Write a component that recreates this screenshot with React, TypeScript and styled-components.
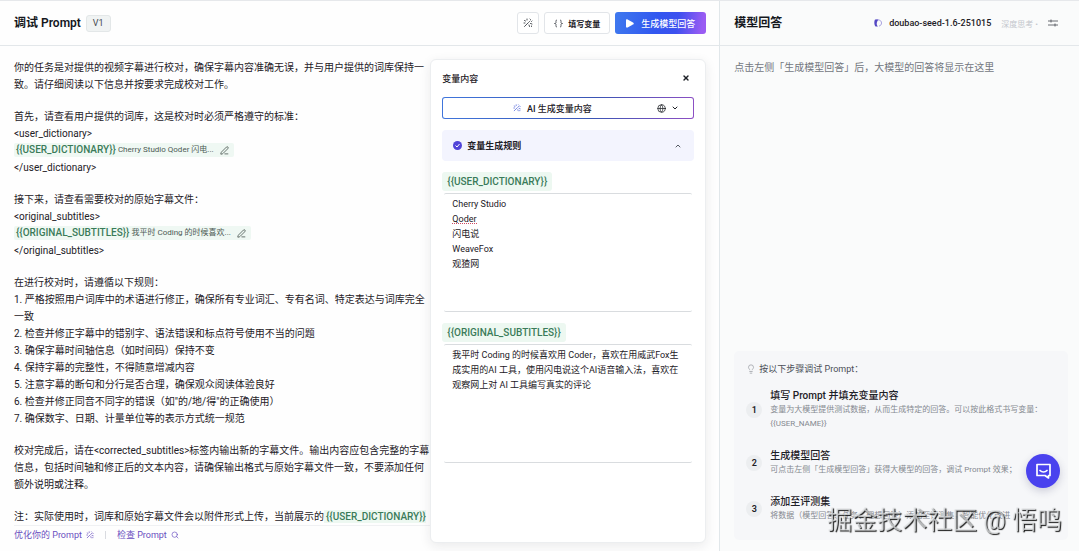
import React from "react";
import styled, { createGlobalStyle } from "styled-components";
import { ChevronDown, ChevronUp, Globe, Lightbulb, PenLine, Search, X } from "lucide-react";

const Global = createGlobalStyle`
  * { box-sizing: border-box; }
  body {
    margin: 0;
    background: #fefefe;
    color: #1d2026;
    font-family: Roboto, "Noto Sans CJK SC", "Liberation Sans", sans-serif;
    font-size: 10px;
  }
  button, textarea { font: inherit; color: inherit; }
  button { cursor: pointer; padding: 0; }
  p, h1, h2, h3, ol { margin: 0; padding: 0; }
  svg { flex: none; }
`;

const Page = styled.div`
  display: grid;
  grid-template-columns: 2fr 1fr;
  min-height: 100vh;
  border-top: 1px solid #e6e8eb;
`;

const Column = styled.section<{ $muted?: boolean }>`
  display: flex;
  flex-direction: column;
  min-width: 0;
  background: ${(p) => (p.$muted ? "#fafbfb" : "#fefefe")};
  border-left: ${(p) => (p.$muted ? "1px solid #e1e7ea" : "none")};
`;

const Header = styled.header<{ $end: number }>`
  display: flex;
  align-items: center;
  gap: 5px;
  height: 45px;
  padding: 0 ${(p) => p.$end}px 0 14px;
  border-bottom: 1px solid #e3e7ea;
`;

const Title = styled.h1`
  font-size: 12px;
  line-height: 18px;
  font-weight: 600;
  color: #15181d;
`;

const Version = styled.span`
  padding: 0 6px;
  border: 1px solid #e3e7e8;
  border-radius: 3px;
  background: #f0f3f3;
  color: #444950;
  font-size: 9px;
  line-height: 15px;
`;

const Spacer = styled.div`
  flex: 1;
`;

const OutlineButton = styled.button`
  display: flex;
  align-items: center;
  justify-content: center;
  gap: 5px;
  height: 22px;
  padding: 0 9px;
  border: 1px solid #e2e5e9;
  border-radius: 3px;
  background: #fff;
  font-size: 8px;
  font-weight: 600;
`;

const IconButton = styled(OutlineButton)`
  width: 22px;
  padding: 0;
`;

const PrimaryButton = styled(OutlineButton)`
  gap: 7px;
  padding: 0 11px;
  border: 0;
  background: linear-gradient(100deg, #3f79ee 0%, #3157f0 45%, #3d50ef 68%, #9a5cf3 95%);
  color: #fff;
  font-size: 9px;
  font-weight: 500;
`;

const Body = styled.div`
  display: grid;
  grid-template-columns: minmax(0, 1fr) 276px;
  flex: 1;
  padding: 0 13px 0 14px;
`;

const Editor = styled.div`
  display: flex;
  flex-direction: column;
  padding-top: 13px;
`;

const Prompt = styled.div`
  display: flex;
  flex-direction: column;
  gap: 15px;
  line-height: 17px;
`;

const Chip = styled.span`
  display: inline-flex;
  align-items: center;
  gap: 2px;
  height: 14px;
  margin-top: 1px;
  padding: 0 5px 0 2px;
  border-radius: 2px;
  background: #eff8f3;
  color: #4c5a54;
  font-size: 8px;
  line-height: 14px;
  vertical-align: top;
`;

const ChipLine = styled.p`
  height: 17px;
`;

const Variable = styled.strong`
  color: #3a7b59;
  font-size: 10px;
  font-weight: 500;
`;

const InlineVariable = styled(Variable)`
  padding: 1px 0 1px 2px;
  background: #edf8f1;
`;

const EditButton = styled.button`
  display: flex;
  margin-left: 4px;
  border: 0;
  background: none;
  color: #3c4a44;
`;

const EditorFooter = styled.footer`
  display: flex;
  align-items: center;
  gap: 11px;
  height: 18px;
  border-top: 1px solid #f0f1f3;
`;

const FooterLink = styled.a`
  display: flex;
  align-items: center;
  gap: 4px;
  color: #6a4fc0;
  font-size: 9px;
  line-height: 14px;
  text-decoration: none;
`;

const Divider = styled.span`
  width: 1px;
  height: 8px;
  background: #d9dbe0;
`;

const Panel = styled.aside`
  margin: 13px 0 8px;
  padding: 10px 11px 0;
  border: 1px solid #eceef0;
  border-radius: 6px;
  background: #fff;
  box-shadow: 0 3px 12px rgba(30, 35, 45, 0.09);
`;

const PanelHead = styled.div`
  display: flex;
  align-items: center;
  justify-content: space-between;
  height: 16px;
  padding-right: 4px;
`;

const PanelTitle = styled.h2`
  font-size: 9px;
  font-weight: 500;
`;

const CloseButton = styled.button`
  display: flex;
  border: 0;
  background: none;
`;

const GenerateBar = styled.div`
  display: grid;
  grid-template-columns: 1fr auto;
  align-items: center;
  height: 22px;
  margin-top: 11px;
  padding-right: 14px;
  border: 1px solid transparent;
  border-radius: 3px;
  background:
    linear-gradient(#fff, #fff) padding-box,
    linear-gradient(100deg, #4076dc, #3a55b4 60%, #8e4fc4) border-box;
`;

const GenerateButton = styled.button`
  display: flex;
  align-items: center;
  justify-content: center;
  gap: 6px;
  height: 20px;
  padding-left: 4px;
  border: 0;
  background: none;
  font-size: 9px;
  font-weight: 500;
`;

const LanguageButton = styled.button`
  display: flex;
  align-items: center;
  gap: 5px;
  border: 0;
  background: none;
`;

const Rules = styled.button`
  display: flex;
  align-items: center;
  gap: 5px;
  width: 100%;
  height: 31px;
  margin-top: 11px;
  padding: 0 12px 0 11px;
  border: 0;
  border-radius: 4px;
  background: #f3f4fe;
  font-size: 9px;
  font-weight: 600;
`;

const Field = styled.div`
  position: relative;
  display: flex;
  flex-direction: column;
  align-items: flex-start;
  gap: 2px;
  margin-top: 11px;
`;

const FieldLabel = styled.label`
  padding: 0 5px;
  border-radius: 3px;
  background: #edf8f1;
  color: #3a7b59;
  font-size: 10px;
  font-weight: 500;
  line-height: 19px;
`;

const TextArea = styled.textarea`
  display: block;
  align-self: stretch;
  height: 119px;
  margin: 0 2px;
  padding: 3px 8px;
  border: solid #d9dcdf;
  border-width: 1px 0;
  border-radius: 2px;
  outline: 0;
  background: transparent;
  font-size: 9px;
  line-height: 15px;
  resize: none;
  overflow: hidden;
`;

const SpellingMark = styled.span`
  position: absolute;
  top: 51px;
  left: 10px;
  width: 25px;
  border-bottom: 1px dotted #cf4a62;
  pointer-events: none;
`;

const Model = styled.button`
  display: flex;
  align-items: center;
  gap: 7px;
  border: 0;
  background: none;
  font-size: 9px;
  font-weight: 500;
`;

const Thinking = styled.span`
  margin: 0 5px;
  color: #c3c6cc;
  font-size: 8px;
`;

const PlainButton = styled.button`
  display: flex;
  border: 0;
  background: none;
  color: #444950;
`;

const Hint = styled.p`
  padding: 13px 14px;
  color: #73777e;
  line-height: 17px;
`;

const Guide = styled.section`
  margin: auto 11px 11px 14px;
  padding: 10px 8px 17px 12px;
  border-radius: 5px;
  background: #f6f7f9;
`;

const GuideTitle = styled.h2`
  display: flex;
  align-items: center;
  gap: 3px;
  color: #4b4f57;
  font-size: 9px;
  font-weight: 400;
  line-height: 16px;
`;

const Steps = styled.ol`
  display: flex;
  flex-direction: column;
  gap: 18px;
  margin-top: 12px;
  list-style: none;
`;

const Step = styled.li`
  display: grid;
  grid-template-columns: 16px minmax(0, 1fr);
  align-items: center;
  gap: 8px;
`;

const StepNumber = styled.span`
  border-radius: 50%;
  background: #eceef0;
  font-size: 9px;
  font-weight: 600;
  line-height: 16px;
  text-align: center;
`;

const StepTitle = styled.h3`
  font-size: 10px;
  font-weight: 500;
  line-height: 14px;
`;

const StepText = styled.p`
  color: #858990;
  font-size: 8px;
  line-height: 14px;
`;

const ChatButton = styled.button`
  position: fixed;
  right: 19px;
  bottom: 63px;
  display: flex;
  align-items: center;
  justify-content: center;
  width: 34px;
  height: 34px;
  border: 0;
  border-radius: 50%;
  background: #4a42ee;
  box-shadow: 0 3px 8px rgba(40, 40, 90, 0.2);
`;

const Watermark = styled.div`
  position: fixed;
  right: 17px;
  bottom: 12px;
  color: rgba(226, 228, 230, 0.75);
  font-size: 25px;
  line-height: 36px;
  text-shadow: 1px 1px 1px rgba(0, 0, 0, 0.9);
  white-space: nowrap;
  pointer-events: none;
`;

const MagicIcon = ({ size = 10, color = "currentColor" }: { size?: number; color?: string }) => (
  <svg width={size} height={size} viewBox="0 0 20 20" fill="none" stroke={color} strokeWidth="1.8" strokeLinecap="round" aria-hidden="true">
    <path d="M3 17 11 9M13 7l1-1M8 2v2M3 5l2 1M2 10h2M14 2l1 1M18 6l-1 1M15 11l3 1M12 14l1 3M17 16v1" />
  </svg>
);

const BracesIcon = () => (
  <svg width="9" height="9" viewBox="0 0 18 18" fill="none" stroke="#3b3f46" strokeWidth="1.6" aria-hidden="true">
    <path d="M6 2C3 2 4 5 4 7c0 1-1 2-3 2 2 0 3 1 3 2 0 2-1 5 2 5M12 2c3 0 2 3 2 5 0 1 1 2 3 2-2 0-3 1-3 2 0 2 1 5-2 5" />
  </svg>
);

const PlayIcon = () => (
  <svg width="8" height="9" viewBox="0 0 8 9" fill="#fff" aria-hidden="true">
    <path d="M0 1.4C0 .4.8.2 1.6.5L7 3.4c1 .6 1 1.6 0 2.2L1.6 8.5C.8 8.8 0 8.6 0 7.6Z" />
  </svg>
);

const CheckIcon = () => (
  <svg width="9" height="9" viewBox="0 0 18 18" aria-hidden="true">
    <circle cx="9" cy="9" r="9" fill="#5144d8" />
    <path d="m5 9 3 3 5-6" fill="none" stroke="#fff" strokeWidth="2" />
  </svg>
);

const ModelLogo = () => (
  <svg width="8" height="8" viewBox="0 0 16 16" aria-hidden="true">
    <path d="M4 2h5c4 0 6 3 6 6s-2 6-5 6" fill="none" stroke="#a9a3e0" strokeWidth="2" />
    <path d="M9 1H2C0 4 0 12 3 15h5c-3-3-4-8 1-14Z" fill="#5548c4" />
  </svg>
);

const SettingsIcon = () => (
  <svg width="10" height="8" viewBox="0 0 20 16" fill="none" stroke="currentColor" strokeWidth="1.6" aria-hidden="true">
    <path d="M0 4h20M0 12h20M6 1v6M14 9v6" />
  </svg>
);

const ChatIcon = () => (
  <svg width="17" height="16" viewBox="0 0 17 16" fill="none" stroke="#fff" strokeWidth="1.7" strokeLinejoin="round" strokeLinecap="round" aria-hidden="true">
    <path d="M2 1.500h13v11h-1.500V15L10 12.500H2Z" />
    <path d="M5 7.500c2 2 5 2 7 0" />
  </svg>
);

const steps = [
  {
    title: "填写 Prompt 并填充变量内容",
    text: "变量为大模型提供测试数据，从而生成特定的回答。可以按此格式书写变量：{{USER_NAME}}",
  },
  { title: "生成模型回答", text: "可点击左侧「生成模型回答」获得大模型的回答，调试 Prompt 效果；" },
  { title: "添加至评测集", text: "将数据（模型回答、任务、理想回答）添加至评测集，智能优化改进" },
];

const PromptVariable = ({ name, preview }: { name: string; preview: string }) => (
  <ChipLine>
    <Chip>
      <Variable>{`{{${name}}}`}</Variable>
      {preview}
      <EditButton aria-label="编辑变量">
        <PenLine size={9} />
      </EditButton>
    </Chip>
  </ChipLine>
);

export default function App() {
  return (
    <>
      <Global />
      <Page>
        <Column>
          <Header $end={13}>
            <Title>调试 Prompt</Title>
            <Version>V1</Version>
            <Spacer />
            <IconButton aria-label="优化">
              <MagicIcon color="#3b3f46" />
            </IconButton>
            <OutlineButton>
              <BracesIcon />
              填写变量
            </OutlineButton>
            <PrimaryButton>
              <PlayIcon />
              生成模型回答
            </PrimaryButton>
          </Header>
          <Body>
            <Editor>
              <Prompt>
                <p>你的任务是对提供的视频字幕进行校对，确保字幕内容准确无误，并与用户提供的词库保持一致。请仔细阅读以下信息并按要求完成校对工作。</p>
                <div>
                  <p>首先，请查看用户提供的词库，这是校对时必须严格遵守的标准：</p>
                  <p>&lt;user_dictionary&gt;</p>
                  <PromptVariable name="USER_DICTIONARY" preview="Cherry Studio Qoder 闪电..." />
                  <p>&lt;/user_dictionary&gt;</p>
                </div>
                <div>
                  <p>接下来，请查看需要校对的原始字幕文件：</p>
                  <p>&lt;original_subtitles&gt;</p>
                  <PromptVariable name="ORIGINAL_SUBTITLES" preview="我平时 Coding 的时候喜欢..." />
                  <p>&lt;/original_subtitles&gt;</p>
                </div>
                <div>
                  <p>在进行校对时，请遵循以下规则：</p>
                  <p>1. 严格按照用户词库中的术语进行修正，确保所有专业词汇、专有名词、特定表达与词库完全一致</p>
                  <p>2. 检查并修正字幕中的错别字、语法错误和标点符号使用不当的问题</p>
                  <p>3. 确保字幕时间轴信息（如时间码）保持不变</p>
                  <p>4. 保持字幕的完整性，不得随意增减内容</p>
                  <p>5. 注意字幕的断句和分行是否合理，确保观众阅读体验良好</p>
                  <p>6. 检查并修正同音不同字的错误（如"的/地/得"的正确使用）</p>
                  <p>7. 确保数字、日期、计量单位等的表示方式统一规范</p>
                </div>
                <p>校对完成后，请在&lt;corrected_subtitles&gt;标签内输出新的字幕文件。输出内容应包含完整的字幕信息，包括时间轴和修正后的文本内容，请确保输出格式与原始字幕文件一致，不要添加任何额外说明或注释。</p>
                <p>注：实际使用时，词库和原始字幕文件会以附件形式上传，当前展示的<InlineVariable>{"{{USER_DICTIONARY}}"}</InlineVariable></p>
              </Prompt>
              <EditorFooter>
                <FooterLink href="#optimize">优化你的 Prompt <MagicIcon size={8} /></FooterLink>
                <Divider />
                <FooterLink href="#check">检查 Prompt <Search size={8} /></FooterLink>
              </EditorFooter>
            </Editor>
            <Panel>
              <PanelHead>
                <PanelTitle>变量内容</PanelTitle>
                <CloseButton aria-label="关闭"><X size={8} strokeWidth={4} /></CloseButton>
              </PanelHead>
              <GenerateBar>
                <GenerateButton>
                  <MagicIcon size={8} color="#4c62d8" />
                  AI 生成变量内容
                </GenerateButton>
                <LanguageButton aria-label="语言">
                  <Globe size={9} />
                  <ChevronDown size={8} strokeWidth={3} />
                </LanguageButton>
              </GenerateBar>
              <Rules aria-expanded="true">
                <CheckIcon />
                变量生成规则
                <Spacer />
                <ChevronUp size={8} strokeWidth={3} color="#555a63" />
              </Rules>
              <Field>
                <FieldLabel htmlFor="dictionary">{"{{USER_DICTIONARY}}"}</FieldLabel>
                <TextArea id="dictionary" spellCheck={false} defaultValue={"Cherry Studio\nQoder\n闪电说\nWeaveFox\n观猹网"} />
                <SpellingMark />
              </Field>
              <Field>
                <FieldLabel htmlFor="subtitles">{"{{ORIGINAL_SUBTITLES}}"}</FieldLabel>
                <TextArea
                  id="subtitles"
                  spellCheck={false}
                  defaultValue="我平时 Coding 的时候喜欢用 Coder，喜欢在用威武Fox生成实用的AI 工具，使用闪电说这个AI语音输入法，喜欢在观察网上对 AI 工具编写真实的评论"
                />
              </Field>
            </Panel>
          </Body>
        </Column>
        <Column $muted>
          <Header $end={21}>
            <Title as="h2">模型回答</Title>
            <Spacer />
            <Model>
              <ModelLogo />
              doubao-seed-1.6-251015
            </Model>
            <Thinking>深度思考 •</Thinking>
            <PlainButton aria-label="模型设置"><SettingsIcon /></PlainButton>
          </Header>
          <Hint>点击左侧「生成模型回答」后，大模型的回答将显示在这里</Hint>
          <Guide>
            <GuideTitle>
              <Lightbulb size={10} color="#a3a7ad" />
              按以下步骤调试 Prompt：
            </GuideTitle>
            <Steps>
              {steps.map((step, index) => (
                <Step key={step.title}>
                  <StepNumber>{index + 1}</StepNumber>
                  <div>
                    <StepTitle>{step.title}</StepTitle>
                    <StepText>{step.text}</StepText>
                  </div>
                </Step>
              ))}
            </Steps>
          </Guide>
        </Column>
      </Page>
      <ChatButton aria-label="在线咨询"><ChatIcon /></ChatButton>
      <Watermark>掘金技术社区 @ 悟鸣</Watermark>
    </>
  );
}
